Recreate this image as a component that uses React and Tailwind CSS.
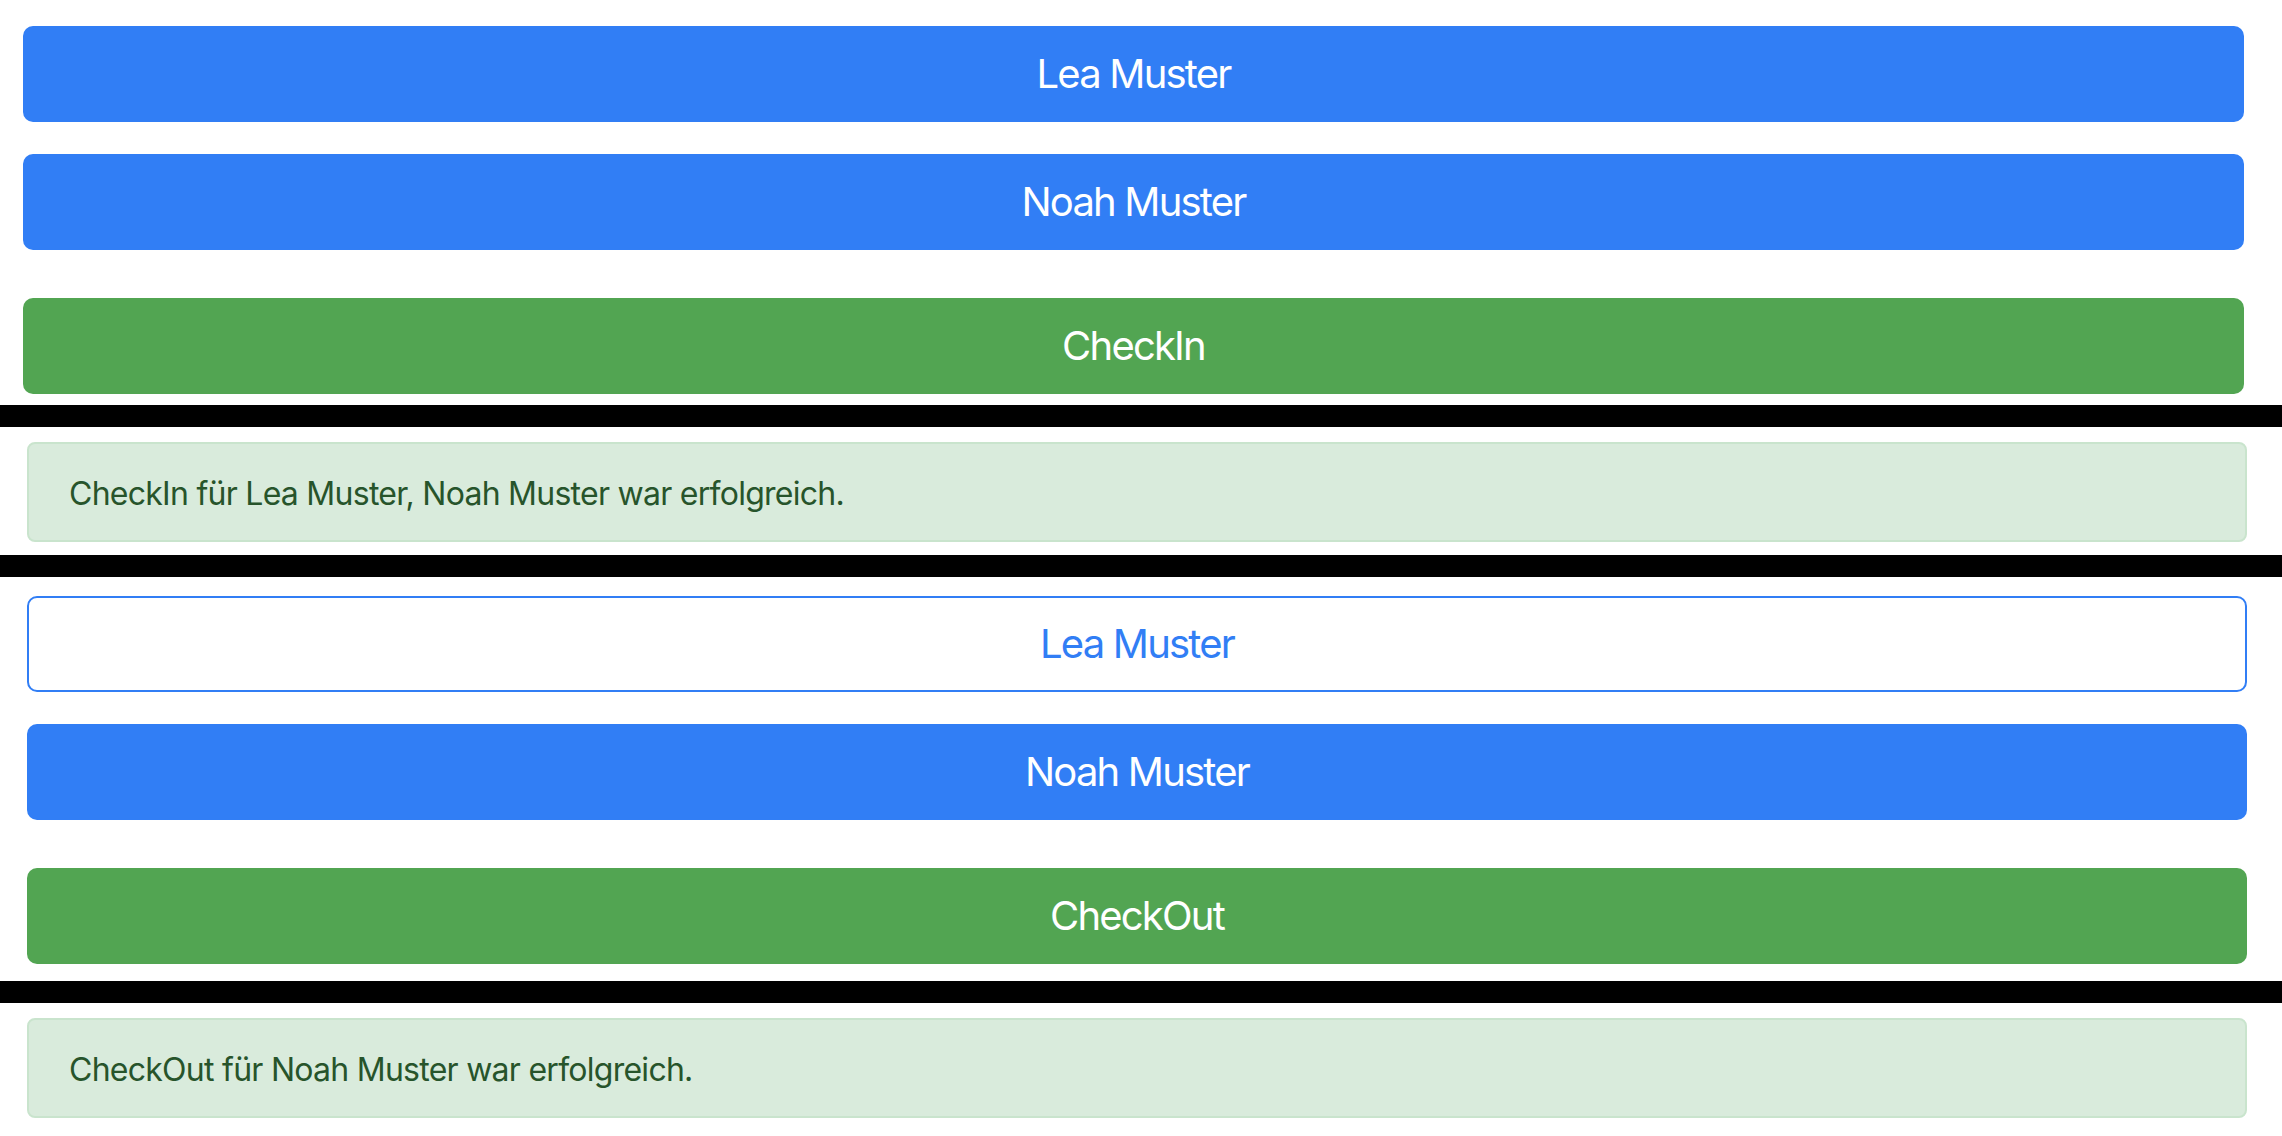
export default function App() {
  const font = { fontFamily: 'Inter, "Liberation Sans", sans-serif' };
  return (
    <div className="w-full min-h-[1136px] bg-white" style={font}>
      <div className="flex flex-col pt-[26px] pl-[23px] pr-[38px]">
        <button className="h-[96px] w-full rounded-[10px] bg-[#317ef5] text-white text-[40px] tracking-[-0.045em] flex items-center justify-center">
          Lea Muster
        </button>
        <button className="mt-[32px] h-[96px] w-full rounded-[10px] bg-[#317ef5] text-white text-[40px] tracking-[-0.045em] flex items-center justify-center">
          Noah Muster
        </button>
        <button className="mt-[48px] h-[96px] w-full rounded-[10px] bg-[#52a552] text-white text-[40px] tracking-[-0.045em] flex items-center justify-center">
          CheckIn
        </button>
      </div>
      <div className="mt-[11px] h-[22px] w-full bg-black" />
      <div className="pt-[15px] pb-[13px] pl-[27px] pr-[35px]">
        <div className="h-[100px] rounded-[8px] border-2 border-[#c9e4cd] bg-[#d9ebdc] px-[40px] pt-[4px] flex items-center text-[32px] text-[#27542b] tracking-[-0.023em]">
          CheckIn für Lea Muster, Noah Muster war erfolgreich.
        </div>
      </div>
      <div className="h-[22px] w-full bg-black" />
      <div className="flex flex-col pt-[19px] pb-[17px] pl-[27px] pr-[35px]">
        <button className="h-[96px] w-full rounded-[10px] border-2 border-[#317ef5] bg-white text-[#317ef5] text-[40px] tracking-[-0.045em] flex items-center justify-center">
          Lea Muster
        </button>
        <button className="mt-[32px] h-[96px] w-full rounded-[10px] bg-[#317ef5] text-white text-[40px] tracking-[-0.045em] flex items-center justify-center">
          Noah Muster
        </button>
        <button className="mt-[48px] h-[96px] w-full rounded-[10px] bg-[#52a552] text-white text-[40px] tracking-[-0.045em] flex items-center justify-center">
          CheckOut
        </button>
      </div>
      <div className="h-[22px] w-full bg-black" />
      <div className="pt-[15px] pl-[27px] pr-[35px]">
        <div className="h-[100px] rounded-[8px] border-2 border-[#c9e4cd] bg-[#d9ebdc] px-[40px] pt-[4px] flex items-center text-[32px] text-[#27542b] tracking-[-0.023em]">
          CheckOut für Noah Muster war erfolgreich.
        </div>
      </div>
    </div>
  );
}
